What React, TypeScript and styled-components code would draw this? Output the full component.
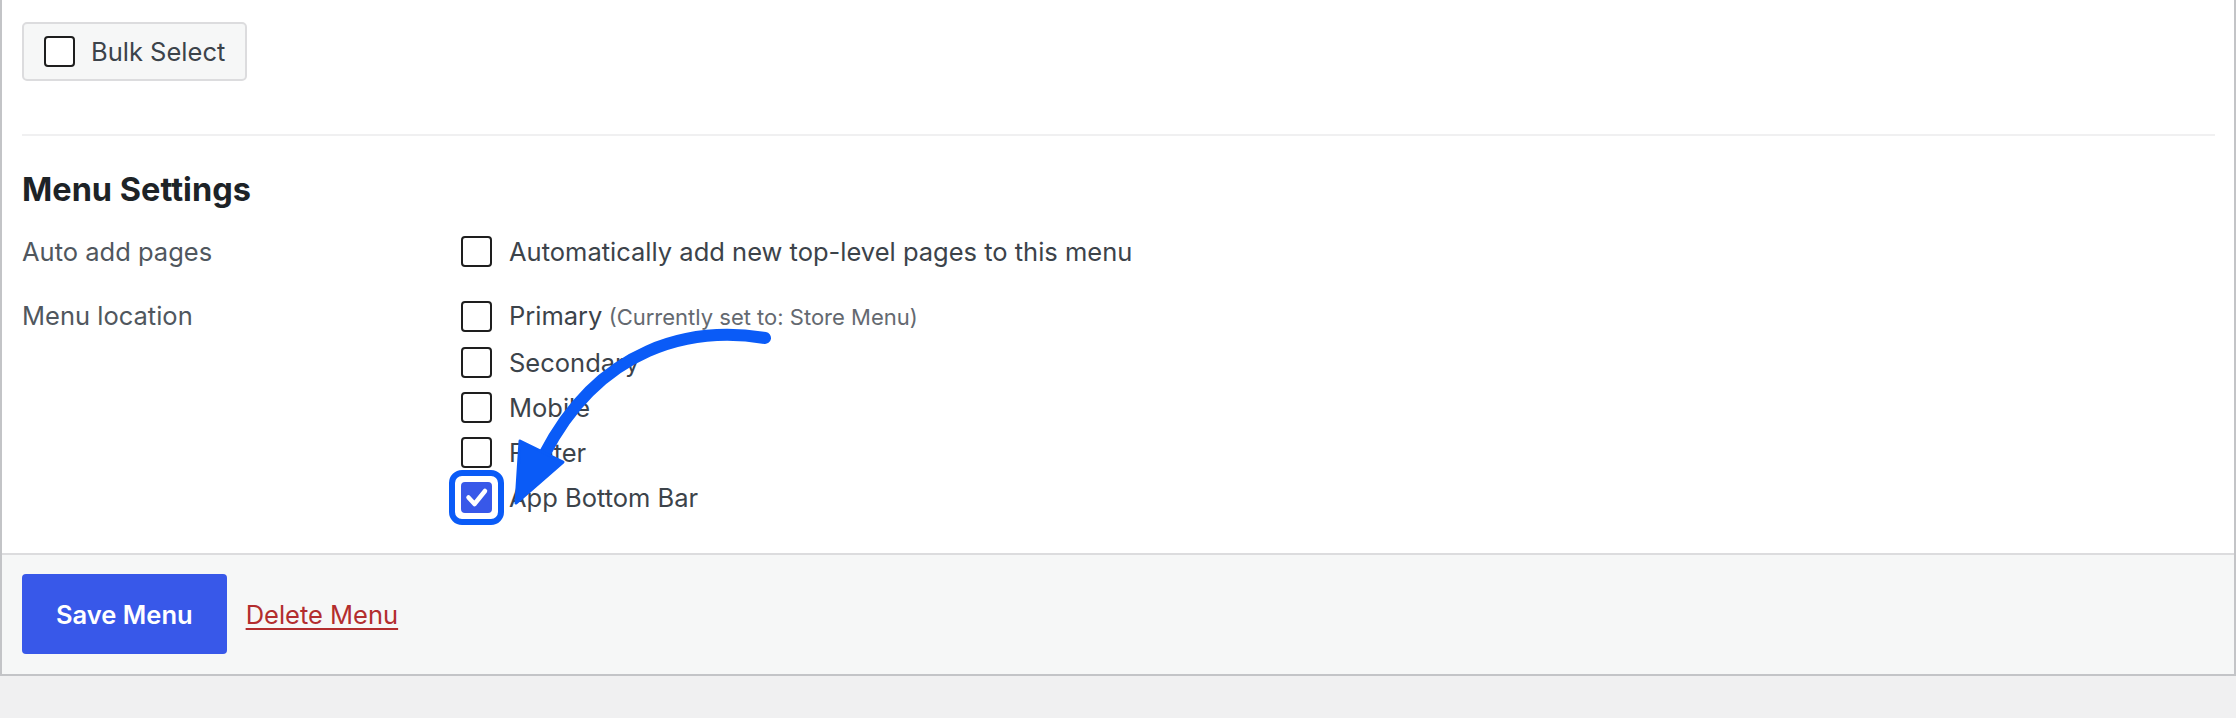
import React from 'react';
import styled, {createGlobalStyle} from "styled-components";

const GlobalStyle = createGlobalStyle`
    html, body {
        margin: 0;
        padding: 0;
        background: #f0f0f1;
    }

    body {
        font-family: Inter, "Liberation Sans", sans-serif;
        color: #3c434a;
        -webkit-font-smoothing: antialiased;
    }
`

const locations = [
    {name: 'Primary', hint: '(Currently set to: Store Menu)'},
    {name: 'Secondary'},
    {name: 'Mobile'},
    {name: 'Footer'},
    {name: 'App Bottom Bar', checked: true, highlight: true},
]

const CheckMark = () => (
    <svg width="31" height="31" viewBox="0 0 31 31">
        <path d="M7.5 15.5 L13.5 22 L24 9" fill="none" stroke="#fff" strokeWidth="4.5"
              strokeLinecap="round" strokeLinejoin="round"/>
    </svg>
)

const Checkbox = ({checked, highlight}: { checked?: boolean; highlight?: boolean }) => (
    <Box $checked={checked} $highlight={highlight}>
        {checked && <CheckMark/>}
    </Box>
)

export default function App() {
    return (
        <>
            <GlobalStyle/>
            <Panel>
                <PanelBody>
                    <BulkButton type="button">
                        <Checkbox/>
                        Bulk Select
                    </BulkButton>
                    <Divider/>
                    <SectionTitle>Menu Settings</SectionTitle>
                    <SettingRow>
                        <SettingLabel>Auto add pages</SettingLabel>
                        <OptionList>
                            <Option>
                                <Checkbox/>
                                Automatically add new top-level pages to this menu
                            </Option>
                        </OptionList>
                    </SettingRow>
                    <SettingRow $spaced>
                        <SettingLabel>Menu location</SettingLabel>
                        <OptionList>
                            {locations.map((loc) => (
                                <Option key={loc.name}>
                                    <Checkbox checked={loc.checked} highlight={loc.highlight}/>
                                    <span>
                                        {loc.name}
                                        {loc.hint && <Hint> {loc.hint}</Hint>}
                                    </span>
                                </Option>
                            ))}
                        </OptionList>
                    </SettingRow>
                </PanelBody>
                <Footer>
                    <SaveButton type="button">Save Menu</SaveButton>
                    <DeleteLink href="#">Delete Menu</DeleteLink>
                </Footer>

                {/* hand-drawn annotation arrow */}
                <Annotation width="2236" height="718" viewBox="0 0 2236 718">
                    <path d="M763 338 C690 326, 598 346, 542 455" fill="none" stroke="#0a5bf7"
                          strokeWidth="12" strokeLinecap="round"/>
                    <path d="M518 441 L561 462 L514 503 Z" fill="#0a5bf7" stroke="#0a5bf7"
                          strokeWidth="3" strokeLinejoin="round"/>
                </Annotation>
            </Panel>
        </>
    );
}

const Panel = styled.div`
    position: relative;
    background: #fff;
    border: 2px solid #c3c4c7;
    border-top: none;
`

const PanelBody = styled.div`
    padding: 22px 19px 40px 20px;
`

const Box = styled.span<{ $checked?: boolean; $highlight?: boolean }>`
    position: relative;
    flex: none;
    box-sizing: border-box;
    width: 31px;
    height: 31px;
    border: 2px solid ${p => p.$checked ? '#3858e9' : '#1e1e1e'};
    border-radius: 4px;
    background: ${p => p.$checked ? '#3858e9' : '#fff'};
    display: flex;
    align-items: center;
    justify-content: center;

    svg {
        position: absolute;
        top: -2px;
        left: -2px;
    }

    &::after {
        content: '';
        display: ${p => p.$highlight ? 'block' : 'none'};
        position: absolute;
        inset: -14px;
        border: 6px solid #0a5bf7;
        border-radius: 13px;
    }
`

const BulkButton = styled.button`
    display: inline-flex;
    align-items: center;
    gap: 16px;
    box-sizing: border-box;
    height: 59px;
    padding: 0 20px;
    background: #f6f7f7;
    border: 2px solid #dcdcde;
    border-radius: 5px;
    font-family: inherit;
    font-size: 25.5px;
    color: #3c434a;
`

const Divider = styled.hr`
    margin: 53px 0 0;
    border: none;
    height: 2px;
    background: #f0f0f1;
`

const SectionTitle = styled.h3`
    margin: 38px 0 0;
    font-size: 32.5px;
    line-height: 31px;
    font-weight: 700;
    color: #1d2327;
`

const SettingRow = styled.div<{ $spaced?: boolean }>`
    display: grid;
    grid-template-columns: 439px 1fr;
    margin-top: ${p => p.$spaced ? '33px' : '31px'};
`

const SettingLabel = styled.div`
    font-size: 25.5px;
    line-height: 31px;
    color: #50575e;
`

const OptionList = styled.div`
    display: flex;
    flex-direction: column;
    gap: 14px;
`

const Option = styled.label`
    display: flex;
    align-items: center;
    gap: 17px;
    font-size: 25.5px;
    line-height: 31px;
    color: #3c434a;
`

const Hint = styled.span`
    font-size: 22px;
    color: #646970;
`

const Footer = styled.div`
    display: flex;
    align-items: center;
    gap: 19px;
    padding: 19px 20px 20px;
    background: #f6f7f7;
    border-top: 2px solid #dcdcde;
`

const SaveButton = styled.button`
    box-sizing: border-box;
    height: 80px;
    padding: 0 34px;
    border: none;
    border-radius: 4px;
    background: #3858e9;
    color: #fff;
    font-family: inherit;
    font-size: 25.5px;
    font-weight: 600;
`

const DeleteLink = styled.a`
    font-size: 25.5px;
    color: #b32d2e;
    text-decoration: underline;
    text-underline-offset: 4px;
`

const Annotation = styled.svg`
    position: absolute;
    top: 0;
    left: 0;
    pointer-events: none;
`
